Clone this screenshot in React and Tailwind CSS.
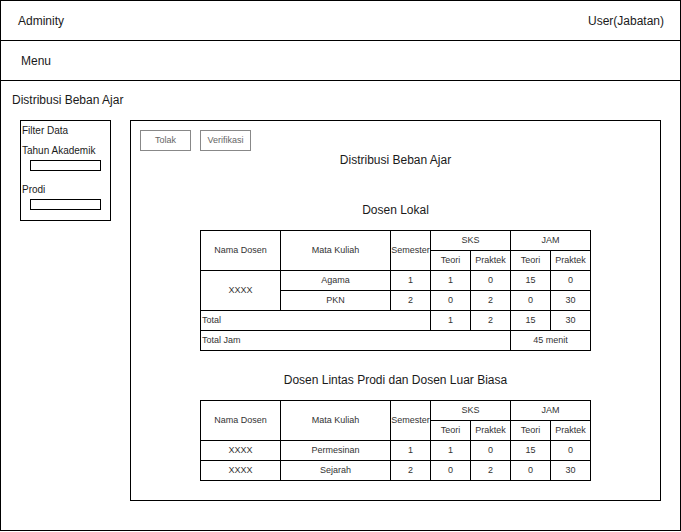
import React from 'react';

const font = { fontFamily: '"Liberation Sans", Arial, sans-serif' };

const cell = 'border border-black text-center align-middle p-0';

const SksJamHead = () => (
  <>
    <tr className="h-[20px]">
      <td rowSpan={2} className={cell}>Nama Dosen</td>
      <td rowSpan={2} className={cell}>Mata Kuliah</td>
      <td rowSpan={2} className={cell}>Semester</td>
      <td colSpan={2} className={cell}>SKS</td>
      <td colSpan={2} className={cell}>JAM</td>
    </tr>
    <tr className="h-[20px]">
      <td className={cell}>Teori</td>
      <td className={cell}>Praktek</td>
      <td className={cell}>Teori</td>
      <td className={cell}>Praktek</td>
    </tr>
  </>
);

const Cols = () => (
  <colgroup>
    <col className="w-[80px]" />
    <col className="w-[110px]" />
    <col className="w-[40px]" />
    <col className="w-[40px]" />
    <col className="w-[40px]" />
    <col className="w-[40px]" />
    <col className="w-[40px]" />
  </colgroup>
);

const DosenLokal = () => (
  <table className="mx-auto border-collapse table-fixed w-[391px] text-[9px] leading-[11px] text-[#333]">
    <Cols />
    <tbody>
      <SksJamHead />
      <tr className="h-[20px]">
        <td rowSpan={2} className={cell}>XXXX</td>
        <td className={cell}>Agama</td>
        <td className={cell}>1</td>
        <td className={cell}>1</td>
        <td className={cell}>0</td>
        <td className={cell}>15</td>
        <td className={cell}>0</td>
      </tr>
      <tr className="h-[20px]">
        <td className={cell}>PKN</td>
        <td className={cell}>2</td>
        <td className={cell}>0</td>
        <td className={cell}>2</td>
        <td className={cell}>0</td>
        <td className={cell}>30</td>
      </tr>
      <tr className="h-[20px]">
        <td colSpan={3} className="border border-black text-left align-middle p-0 pl-[1px]">Total</td>
        <td className={cell}>1</td>
        <td className={cell}>2</td>
        <td className={cell}>15</td>
        <td className={cell}>30</td>
      </tr>
      <tr className="h-[20px]">
        <td colSpan={5} className="border border-black text-left align-middle p-0 pl-[1px]">Total Jam</td>
        <td colSpan={2} className={cell}>45 menit</td>
      </tr>
    </tbody>
  </table>
);

const lintas = [
  ['XXXX', 'Permesinan', '1', '1', '0', '15', '0'],
  ['XXXX', 'Sejarah', '2', '0', '2', '0', '30'],
];

const DosenLintas = () => (
  <table className="mx-auto border-collapse table-fixed w-[391px] text-[9px] leading-[11px] text-[#333]">
    <Cols />
    <tbody>
      <SksJamHead />
      {lintas.map((row, i) => (
        <tr key={i} className="h-[20px]">
          {row.map((v, j) => (
            <td key={j} className={cell}>{v}</td>
          ))}
        </tr>
      ))}
    </tbody>
  </table>
);

export default function App() {
  return (
    <div style={font} className="w-[681px] h-[531px] border border-black bg-white text-[#1a1a1a] box-border">
      {/* top bar */}
      <div className="h-[40px] border-b border-black flex items-center justify-between pl-[17px] pr-[16px] text-[12px]">
        <span>Adminity</span>
        <span>User(Jabatan)</span>
      </div>
      <div className="h-[40px] border-b border-black flex items-center pl-[20px] text-[12px]">
        <span>Menu</span>
      </div>

      <div className="pl-[11px] pt-[12px] text-[12px] leading-[14px]">Distribusi Beban Ajar</div>

      <div className="flex items-start gap-[19px] pl-[19px] mt-[13px]">
        {/* filter */}
        <div className="w-[91px] h-[101px] border border-black pl-[1px] pt-[4px] text-[10px] leading-[12px]">
          <div>Filter Data</div>
          <div className="mt-[8px]">Tahun Akademik</div>
          <div className="mt-[3px] ml-[8px] w-[71px] h-[11px] border border-black" />
          <div className="mt-[13px]">Prodi</div>
          <div className="mt-[3px] ml-[8px] w-[71px] h-[11px] border border-black" />
        </div>

        {/* main panel */}
        <div className="w-[531px] h-[381px] border border-black">
          <div className="flex gap-[9px] pl-[9px] pt-[9px]">
            <button className="w-[51px] h-[21px] border border-[#888] text-[9px] text-[#666]">Tolak</button>
            <button className="w-[51px] h-[21px] border border-[#888] text-[9px] text-[#666]">Verifikasi</button>
          </div>
          <div className="mt-[2px] text-center text-[12px] leading-[14px]">Distribusi Beban Ajar</div>
          <div className="mt-[36px] text-center text-[12px] leading-[14px]">Dosen Lokal</div>
          <div className="mt-[13px]">
            <DosenLokal />
          </div>
          <div className="mt-[22px] text-center text-[12px] leading-[14px]">Dosen Lintas Prodi dan Dosen Luar Biasa</div>
          <div className="mt-[13px]">
            <DosenLintas />
          </div>
        </div>
      </div>
    </div>
  );
}
